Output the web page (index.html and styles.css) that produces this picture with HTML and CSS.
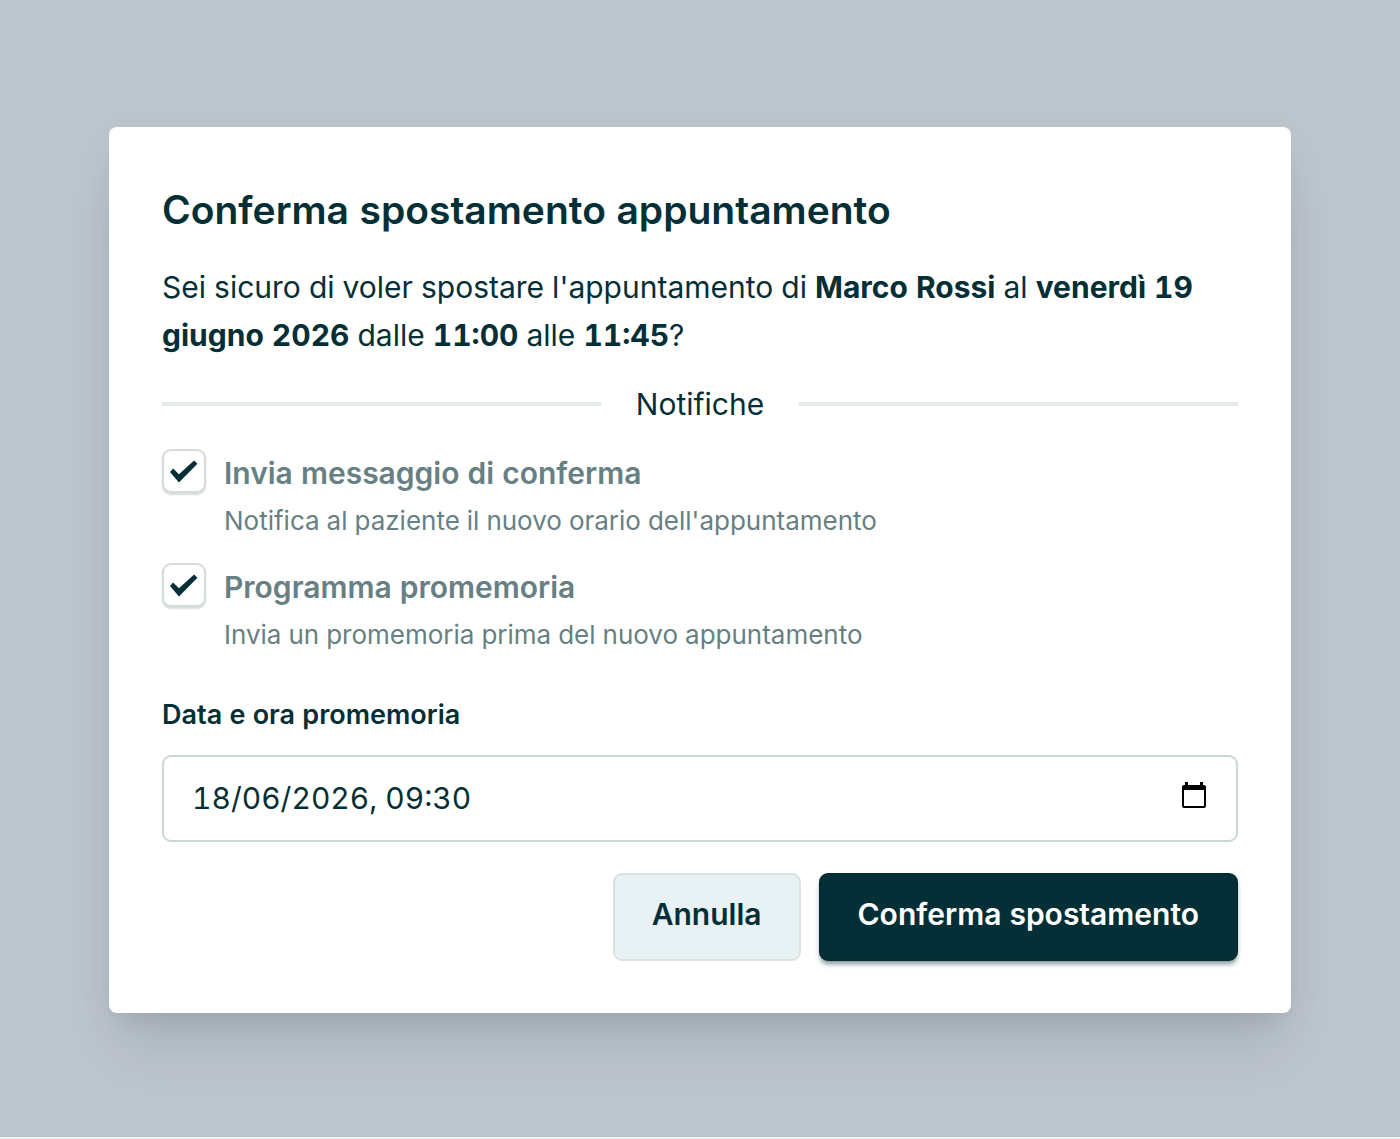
FILE: index.html
```html
<!DOCTYPE html>
<html lang="it">
<head>
<meta charset="utf-8">
<meta name="viewport" content="width=device-width, initial-scale=1">
<title>Conferma spostamento appuntamento</title>
<link rel="stylesheet" href="styles.css">
</head>
<body>
<main class="overlay">
  <form class="dialog" role="dialog" aria-labelledby="dialog-title">
    <h1 class="dialog-title" id="dialog-title">Conferma spostamento appuntamento</h1>
    <p class="dialog-text">Sei sicuro di voler spostare l'appuntamento di <strong>Marco Rossi</strong> al <strong>venerdì 19 giugno 2026</strong> dalle <strong>11:00</strong> alle <strong>11:45</strong>?</p>
    <div class="divider">Notifiche</div>
    <div class="options">
      <div class="option">
        <input class="checkbox" type="checkbox" id="send" aria-describedby="send-help" checked>
        <div class="option-body">
          <label class="option-label" for="send">Invia messaggio di conferma</label>
          <p class="option-help" id="send-help">Notifica al paziente il nuovo orario dell'appuntamento</p>
        </div>
      </div>
      <div class="option">
        <input class="checkbox" type="checkbox" id="remind" aria-describedby="remind-help" checked>
        <div class="option-body">
          <label class="option-label" for="remind">Programma promemoria</label>
          <p class="option-help" id="remind-help">Invia un promemoria prima del nuovo appuntamento</p>
        </div>
      </div>
    </div>
    <label class="field-label" for="when">Data e ora promemoria</label>
    <div class="field">
      <input class="field-input" type="text" id="when" value="18/06/2026, 09:30">
      <button class="picker" type="button" aria-label="Apri calendario">
        <svg class="picker-icon" viewBox="0 0 26 28" aria-hidden="true">
          <path fill-rule="evenodd" d="M4 0h3v3h12V0h3v3h1a2 2 0 0 1 2 2v19a2 2 0 0 1-2 2H3a2 2 0 0 1-2-2V5a2 2 0 0 1 2-2h1zM3 8v16h20V8z"/>
        </svg>
      </button>
    </div>
    <div class="actions">
      <button class="button button-secondary" type="button">Annulla</button>
      <button class="button button-primary" type="submit">Conferma spostamento</button>
    </div>
  </form>
</main>
</body>
</html>
```
FILE: styles.css
```css
* {
  box-sizing: border-box;
}

body {
  margin: 0;
  background: #edf3f5;
  color: #052f36;
  font: 30px/48px Inter, "Liberation Sans", sans-serif;
  font-variant-numeric: tabular-nums;
}

button,
input {
  margin: 0;
  color: inherit;
  font: inherit;
  font-variant-numeric: tabular-nums;
}

h1,
p {
  margin: 0;
}

.overlay {
  display: flex;
  align-items: center;
  justify-content: center;
  min-height: calc(100vh - 2px);
  margin-bottom: 2px;
  padding: 50px 24px 48px;
  background: #bcc4cc;
}

.dialog {
  display: flex;
  flex-direction: column;
  width: 100%;
  max-width: 1182px;
  padding: 53px 53px 52px;
  border-radius: 8px;
  background: #fff;
  box-shadow: 0 44px 55px -11px rgb(20 47 46 / 9%), 0 18px 22px -13px rgb(20 47 46 / 11%), 0 10px 50px rgb(20 47 46 / 3%);
}

.dialog-title {
  margin-bottom: 23px;
  font-size: 39px;
  font-weight: 600;
  line-height: 60px;
}

.dialog-text strong {
  font-weight: 700;
}

.divider {
  display: flex;
  align-items: center;
  gap: 35px;
  margin: 23px 0;
  line-height: 44px;
}

.divider::before,
.divider::after {
  content: "";
  flex: 1;
  height: 4px;
  background: #e7eaeb;
}

.options {
  display: grid;
  gap: 18px;
  margin-bottom: 36px;
}

.option {
  display: flex;
  gap: 18px;
  color: #668083;
}

.option-body {
  flex: 1;
}

.option-label {
  display: block;
  font-weight: 600;
}

.option-help {
  font-size: 26px;
}

.checkbox {
  display: grid;
  flex: none;
  place-items: center;
  width: 44px;
  height: 44px;
  appearance: none;
  border: 2px solid #d5dadb;
  border-radius: 9px;
  background: #fff;
  box-shadow: 0 2px 2px #d9dddd;
}

.checkbox:checked::before {
  content: "";
  width: 28px;
  height: 24px;
  background: #052f36;
  clip-path: polygon(0% 56%, 11% 42%, 32% 66%, 86% 8%, 98% 22%, 32% 100%);
}

.field-label {
  margin-bottom: 20px;
  font-size: 27px;
  font-weight: 600;
  line-height: 40px;
}

.field {
  display: flex;
  align-items: center;
  height: 87px;
  margin-bottom: 31px;
  padding: 0 29px 0 28px;
  border: 2px solid #cdd6d7;
  border-radius: 9px;
}

.field-input {
  flex: 1;
  min-width: 0;
  padding: 0;
  border: 0;
  outline: 0;
  background: none;
}

.picker {
  display: flex;
  padding: 0 0 4px;
  border: 0;
  background: none;
}

.picker-icon {
  width: 26px;
  height: 28px;
}

.actions {
  display: flex;
  flex-wrap: wrap;
  justify-content: flex-end;
  gap: 18px;
}

.button {
  height: 88px;
  padding: 0 37px 5px;
  border: 2px solid;
  border-radius: 9px;
  font-weight: 600;
}

.button-secondary {
  border-color: #d9e2e3;
  background: #e8f1f4;
}

.button-primary {
  border-color: #052b32;
  background: #052f36;
  color: #fff;
  box-shadow: 0 4px 5px -1px rgb(5 47 54 / 50%);
}
```
